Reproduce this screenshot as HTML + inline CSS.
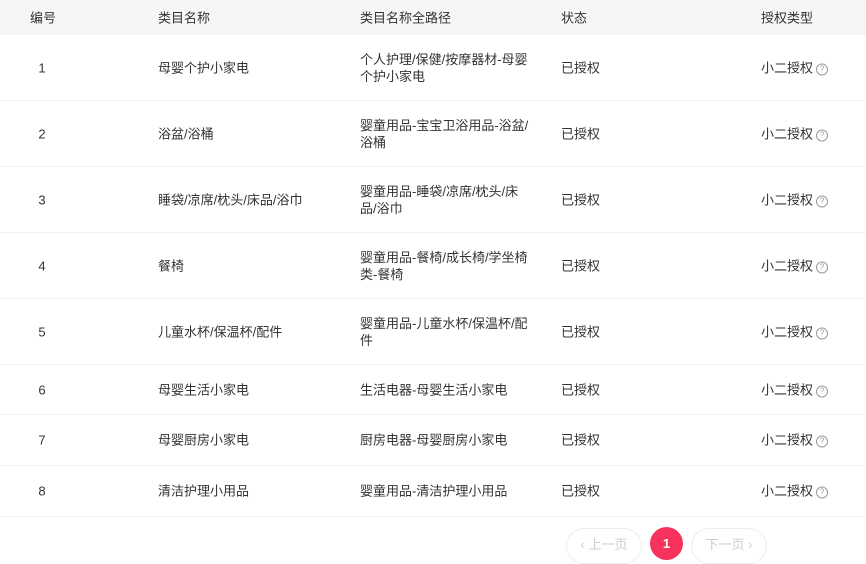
<!DOCTYPE html>
<html><head><meta charset="utf-8"><style>
body{margin:0;width:866px;height:558px;overflow:hidden;background:#fff;font-family:"Liberation Sans","Noto Sans CJK SC",sans-serif;font-size:13px;color:#333}
.hd{position:absolute;left:0;top:0;width:866px;height:35px;background:#f5f6f8}
.row{position:absolute;left:0;width:866px;border-bottom:1px solid #eef0f3}
.c{position:absolute;top:50%;transform:translateY(-50%);line-height:17px;white-space:nowrap}
.n{left:30px;width:24px;text-align:center}.a{left:158px}.p{left:360px;width:170px;white-space:normal;word-break:break-all}.s{left:561px}.t{left:761px}
.q{display:inline-block;width:10px;height:10px;border:1px solid #999;border-radius:50%;font-size:8px;line-height:10px;text-align:center;color:#999;margin-left:3px;vertical-align:1px}
.btn{position:absolute;top:528px;height:34px;border:1px solid #eee;border-radius:18px;color:#ccc;font-size:13px;line-height:32px;text-align:center}
</style></head><body>
<div class="hd">
<div class="c" style="left:30px">编号</div><div class="c a">类目名称</div><div class="c p">类目名称全路径</div><div class="c s">状态</div><div class="c t">授权类型</div>
</div>
<div class="row" style="top:35px;height:65px"><div class="c n">1</div><div class="c a">母婴个护小家电</div><div class="c p">个人护理/保健/按摩器材-母婴个护小家电</div><div class="c s">已授权</div><div class="c t">小二授权<span class="q">?</span></div></div>
<div class="row" style="top:101px;height:65px"><div class="c n">2</div><div class="c a">浴盆/浴桶</div><div class="c p">婴童用品-宝宝卫浴用品-浴盆/<br>浴桶</div><div class="c s">已授权</div><div class="c t">小二授权<span class="q">?</span></div></div>
<div class="row" style="top:167px;height:65px"><div class="c n">3</div><div class="c a">睡袋/凉席/枕头/床品/浴巾</div><div class="c p">婴童用品-睡袋/凉席/枕头/床<br>品/浴巾</div><div class="c s">已授权</div><div class="c t">小二授权<span class="q">?</span></div></div>
<div class="row" style="top:233px;height:65px"><div class="c n">4</div><div class="c a">餐椅</div><div class="c p">婴童用品-餐椅/成长椅/学坐椅<br>类-餐椅</div><div class="c s">已授权</div><div class="c t">小二授权<span class="q">?</span></div></div>
<div class="row" style="top:299px;height:65px"><div class="c n">5</div><div class="c a">儿童水杯/保温杯/配件</div><div class="c p">婴童用品-儿童水杯/保温杯/配<br>件</div><div class="c s">已授权</div><div class="c t">小二授权<span class="q">?</span></div></div>
<div class="row" style="top:365px;height:49px"><div class="c n">6</div><div class="c a">母婴生活小家电</div><div class="c p">生活电器-母婴生活小家电</div><div class="c s">已授权</div><div class="c t">小二授权<span class="q">?</span></div></div>
<div class="row" style="top:415px;height:50px"><div class="c n">7</div><div class="c a">母婴厨房小家电</div><div class="c p">厨房电器-母婴厨房小家电</div><div class="c s">已授权</div><div class="c t">小二授权<span class="q">?</span></div></div>
<div class="row" style="top:466px;height:50px"><div class="c n">8</div><div class="c a">清洁护理小用品</div><div class="c p">婴童用品-清洁护理小用品</div><div class="c s">已授权</div><div class="c t">小二授权<span class="q">?</span></div></div>
<div class="btn" style="left:566px;width:74px">‹ 上一页</div>
<div style="position:absolute;left:650px;top:527px;width:33px;height:33px;border-radius:50%;background:#f7335d;color:#fff;font-weight:bold;text-align:center;line-height:33px">1</div>
<div class="btn" style="left:691px;width:74px">下一页 ›</div>
</body></html>
